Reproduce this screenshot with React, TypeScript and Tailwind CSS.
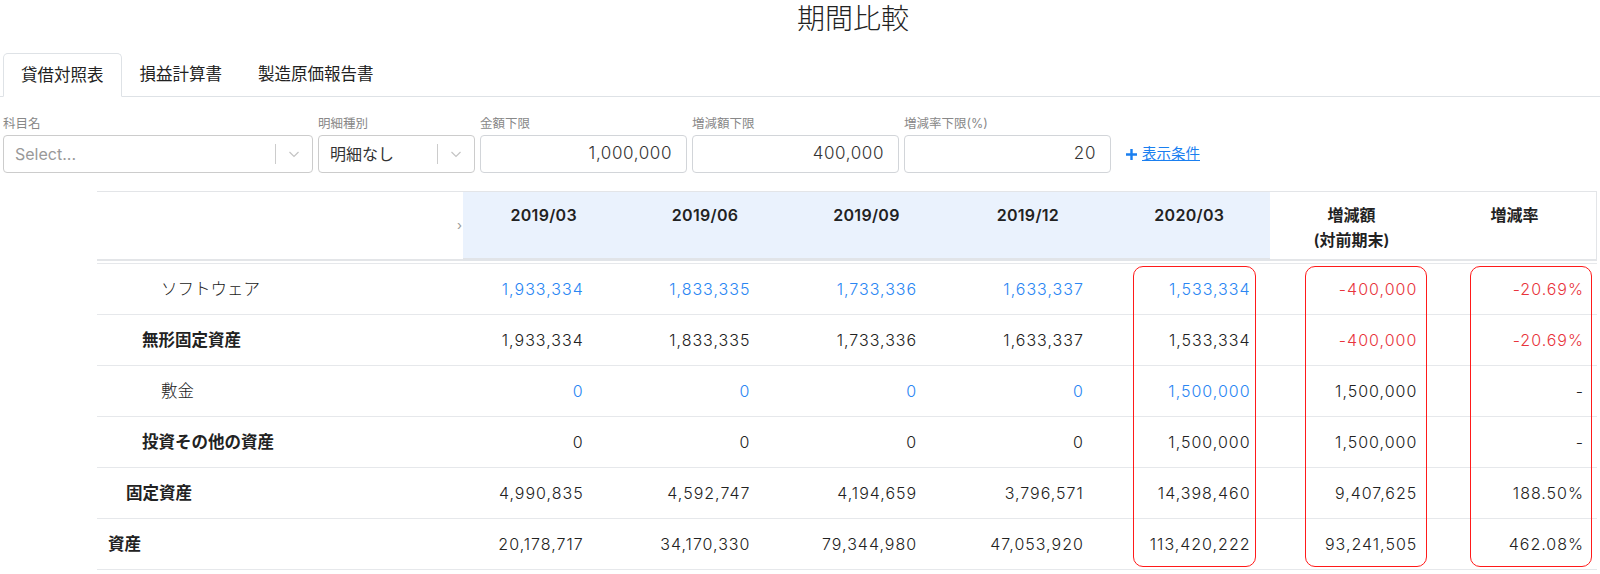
import React from 'react';

type Row = {
  label: string;
  level: number;
  bold: boolean;
  link: boolean;
  values: string[];
  diff: string;
  rate: string;
  neg: boolean;
};

const rows: Row[] = [
  { label: 'ソフトウェア', level: 3, bold: false, link: true, values: ['1,933,334', '1,833,335', '1,733,336', '1,633,337', '1,533,334'], diff: '-400,000', rate: '-20.69%', neg: true },
  { label: '無形固定資産', level: 2, bold: true, link: false, values: ['1,933,334', '1,833,335', '1,733,336', '1,633,337', '1,533,334'], diff: '-400,000', rate: '-20.69%', neg: true },
  { label: '敷金', level: 3, bold: false, link: true, values: ['0', '0', '0', '0', '1,500,000'], diff: '1,500,000', rate: '-', neg: false },
  { label: '投資その他の資産', level: 2, bold: true, link: false, values: ['0', '0', '0', '0', '1,500,000'], diff: '1,500,000', rate: '-', neg: false },
  { label: '固定資産', level: 1, bold: true, link: false, values: ['4,990,835', '4,592,747', '4,194,659', '3,796,571', '14,398,460'], diff: '9,407,625', rate: '188.50%', neg: false },
  { label: '資産', level: 0, bold: true, link: false, values: ['20,178,717', '34,170,330', '79,344,980', '47,053,920', '113,420,222'], diff: '93,241,505', rate: '462.08%', neg: false },
];

const periods = ['2019/03', '2019/06', '2019/09', '2019/12', '2020/03'];
const indent = ['pl-[11px]', 'pl-[29px]', 'pl-[45px]', 'pl-[64px]'];
const tabs = ['貸借対照表', '損益計算書', '製造原価報告書'];

function Chevron() {
  return (
    <svg width="14" height="14" viewBox="0 0 14 14" fill="none">
      <polyline points="2.5,5 7,9.5 11.5,5" stroke="#c4c4c4" strokeWidth="1.2" />
    </svg>
  );
}

function SelectBox({ className, value, placeholder }: { className: string; value?: string; placeholder?: string }) {
  return (
    <div className={`${className} h-[38px] flex items-center border border-[#cccccc] rounded-[4px] bg-white`}>
      <span className={`flex-1 pl-[11px] text-[16px] ${value ? 'text-[#333]' : 'text-[#999]'}`}>{value ?? placeholder}</span>
      <span className="w-px h-[20px] bg-[#cccccc]" />
      <span className="w-[36px] flex justify-center">
        <Chevron />
      </span>
    </div>
  );
}

function NumInput({ value }: { value: string }) {
  return (
    <div className="w-[207px] h-[38px] flex items-center justify-end pr-[14px] border border-[#d2d5d9] rounded-[4px] bg-white text-[17px] tracking-[0.6px] font-light text-[#333]">
      {value}
    </div>
  );
}

function Field({ label, children }: { label: string; children: React.ReactNode }) {
  return (
    <div className="flex flex-col">
      <span className="h-[16px] leading-[16px] mb-[3px] text-[12.5px] text-[#888]">{label}</span>
      {children}
    </div>
  );
}

export default function App() {
  return (
    <div className="w-[1600px] h-[574px] overflow-hidden bg-white text-[#222]" style={{ fontFamily: 'Inter, "Noto Sans CJK JP", sans-serif' }}>
      {/* title */}
      <h1 className="h-[53px] pl-[106px] pt-[1px] text-center text-[28px] leading-[36px] font-light text-[#222]">期間比較</h1>

      {/* tabs */}
      <div className="flex h-[44px] border-b border-[#dee2e6] pl-[3px]">
        {tabs.map((t, i) => (
          <div
            key={t}
            className={`px-[17px] flex items-center text-[16.5px] ${i === 0 ? 'border border-[#dee2e6] border-b-white -mb-px rounded-t-[5px] bg-white' : 'border border-transparent'}`}
          >
            {t}
          </div>
        ))}
      </div>

      {/* filters */}
      <div className="flex items-end gap-[5px] pl-[3px] mt-[19px]">
        <Field label="科目名">
          <SelectBox className="w-[310px]" placeholder="Select..." />
        </Field>
        <Field label="明細種別">
          <SelectBox className="w-[157px]" value="明細なし" />
        </Field>
        <Field label="金額下限">
          <NumInput value="1,000,000" />
        </Field>
        <Field label="増減額下限">
          <NumInput value="400,000" />
        </Field>
        <Field label="増減率下限(%)">
          <NumInput value="20" />
        </Field>
        <a className="ml-[9px] h-[38px] flex items-center gap-[4px] text-[#1a7ff0] text-[14.5px]">
          <svg width="13" height="13" viewBox="0 0 13 13">
            <path d="M6.5 1v11M1 6.5h11" stroke="#1a7ff0" strokeWidth="2.4" />
          </svg>
          <span className="underline">表示条件</span>
        </a>
      </div>

      {/* table */}
      <div className="ml-[97px] w-[1500px] mt-[18px]">
        <div className="flex h-[70px] border-t border-r border-[#e3e5e8]">
          <div className="w-[366px] flex items-center justify-end pr-[1px] border-b-2 border-[#e3e5e8]">
            <span className="text-[#999] text-[13px] leading-none">›</span>
          </div>
          <div className="w-[807px] grid grid-cols-5 bg-[#eaf2fd] border-b-[3px] border-[#e1e4e8]">
            {periods.map((p) => (
              <div key={p} className="text-center pt-[11px] text-[16px] font-semibold tracking-[0.3px]">{p}</div>
            ))}
          </div>
          <div className="flex-1 grid grid-cols-2 border-b-2 border-[#e3e5e8]">
            <div className="text-center pt-[11px] text-[16px] font-semibold leading-[25px]">
              増減額
              <br />
              (対前期末)
            </div>
            <div className="text-center pt-[11px] text-[16px] font-semibold leading-[25px]">増減率</div>
          </div>
        </div>

        <div className="relative mt-[2px] border-t border-[#e6e8eb]">
          {rows.map((r) => (
            <div key={r.label} className="grid grid-cols-[333px_repeat(7,1fr)] h-[51px] border-b border-[#e6e8eb] items-center text-[16px]">
              <div className={`${indent[r.level]} text-[16.5px] ${r.bold ? 'font-semibold' : 'font-light'}`}>{r.label}</div>
              {r.values.map((v, i) => (
                <div key={i} className={`text-right pr-[13px] font-light tracking-[1px] ${r.link ? 'text-[#2a86f3]' : ''}`}>{v}</div>
              ))}
              <div className={`text-right pr-[13px] font-light tracking-[1px] ${r.neg ? 'text-[#e8343c]' : ''}`}>{r.diff}</div>
              <div className={`text-right pr-[13px] font-light tracking-[1px] ${r.neg ? 'text-[#e8343c]' : ''}`}>{r.rate}</div>
            </div>
          ))}
          {/* annotation boxes */}
          <div className="absolute top-[2px] bottom-[3px] left-[1036px] w-[123px] border-[1.5px] border-[#ff1a1a] rounded-[10px]" />
          <div className="absolute top-[2px] bottom-[3px] left-[1208px] w-[122px] border-[1.5px] border-[#ff1a1a] rounded-[10px]" />
          <div className="absolute top-[2px] bottom-[3px] left-[1373px] w-[122px] border-[1.5px] border-[#ff1a1a] rounded-[10px]" />
        </div>
      </div>
    </div>
  );
}
